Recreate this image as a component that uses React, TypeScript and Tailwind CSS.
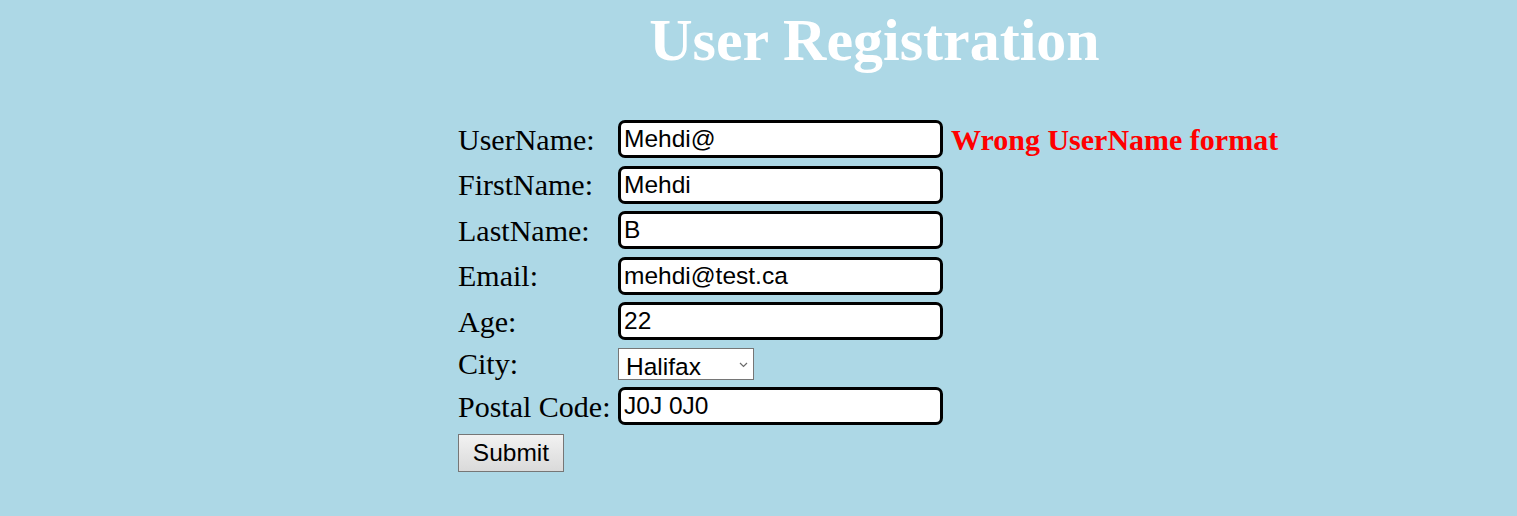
import React from "react";

const serif = { fontFamily: '"Liberation Serif", "Times New Roman", serif' };

const inputCls =
  "h-[38px] w-[325px] rounded-[7px] border-[3px] border-black bg-white pl-[3px] pr-[2px] text-[24.5px] text-black outline-none font-['Liberation_Sans',Arial,sans-serif]";

function Field({ label, value }: { label: string; value: string }) {
  return (
    <div className="flex h-[38px] items-center">
      <label className="w-[160px] shrink-0 whitespace-nowrap text-[30px] text-black">{label}</label>
      <input readOnly value={value} className={inputCls} />
    </div>
  );
}

export default function App() {
  return (
    <div className="min-h-[516px] w-full bg-[#add8e6]" style={serif}>
      <div className="w-[833px] ml-[458px] pt-[10px]">
        <h1 className="text-center text-[60px] font-bold leading-none text-white">User Registration</h1>
        <div className="mt-[50px] flex flex-col gap-[7.5px]">
          <div className="flex h-[38px] items-center">
            <label className="w-[160px] shrink-0 whitespace-nowrap text-[30px] text-black">UserName:</label>
            <input readOnly value="Mehdi@" className={inputCls} />
            <span className="ml-[8px] whitespace-nowrap text-[30px] font-bold text-[#ff0000]">Wrong UserName format</span>
          </div>
          <Field label="FirstName:" value="Mehdi" />
          <Field label="LastName:" value="B" />
          <Field label="Email:" value="mehdi@test.ca" />
          <Field label="Age:" value="22" />
          <div className="flex h-[32px] items-center">
            <label className="w-[160px] shrink-0 whitespace-nowrap text-[30px] text-black">City:</label>
            <div className="relative h-[32px] w-[136px]">
              <select
                defaultValue="Halifax"
                className="h-[32px] w-[136px] appearance-none border border-[#767676] bg-white pl-[7px] pb-[2px] text-[24.5px] text-black outline-none font-['Liberation_Sans',Arial,sans-serif]"
              >
                <option>Halifax</option>
                <option>Toronto</option>
                <option>Vancouver</option>
              </select>
              <svg
                className="pointer-events-none absolute right-[6px] top-[14px]"
                width="9"
                height="6"
                viewBox="0 0 9 6"
              >
                <path d="M1 1 L4.5 4.5 L8 1" fill="none" stroke="#6b6b6b" strokeWidth="1.2" />
              </svg>
            </div>
          </div>
          <Field label="Postal Code:" value="J0J 0J0" />
          <div className="pt-[1px]">
            <button className="h-[38px] w-[106px] border border-[#767676] bg-gradient-to-b from-[#f2f2f2] to-[#dadada] text-[24.5px] text-black font-['Liberation_Sans',Arial,sans-serif]">
              Submit
            </button>
          </div>
        </div>
      </div>
    </div>
  );
}
